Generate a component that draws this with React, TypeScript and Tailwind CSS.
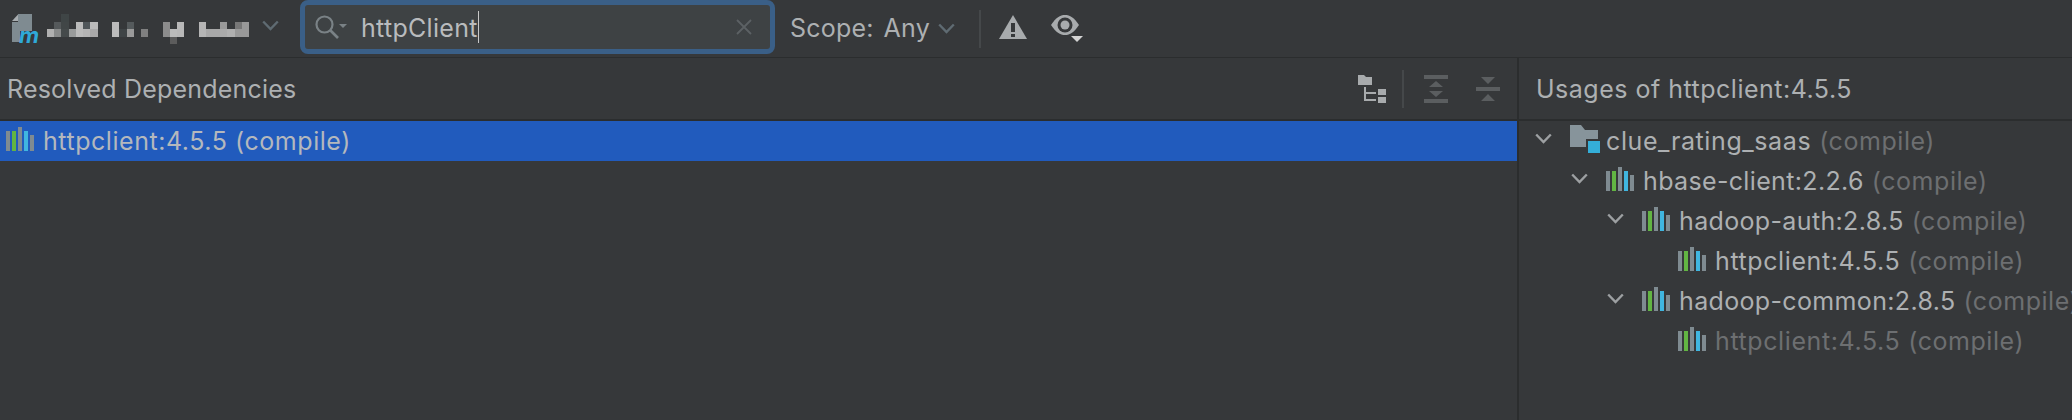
import React from 'react';

const FONT = 'font-["Inter","Liberation_Sans",sans-serif]';

// pixelated (blurred out) project name: x, y, w, h, colour
const MOSAIC: [number, number, number, number, string][] = [
  [0, 15, 8, 8, '#b0b0b0'],
  [7, 8, 8, 7, '#55595b'],
  [7, 15, 8, 8, '#888a8a'],
  [14, 0, 8, 8, '#3f4546'],
  [14, 8, 8, 7, '#414647'],
  [14, 15, 8, 8, '#454a4b'],
  [22, 15, 7, 8, '#999b9b'],
  [29, 8, 7, 15, '#bbbbbb'],
  [36, 8, 7, 7, '#50565a'],
  [36, 15, 7, 8, '#b5b5b5'],
  [43, 8, 8, 7, '#bbbbbb'],
  [43, 15, 8, 8, '#a9a9a9'],
  [65, 8, 7, 15, '#bbbbbb'],
  [72, 15, 8, 8, '#3f4446'],
  [80, 8, 7, 7, '#555a5c'],
  [80, 15, 7, 8, '#9a9a9a'],
  [94, 15, 7, 8, '#808080'],
  [116, 8, 7, 15, '#8c8c8c'],
  [123, 15, 7, 8, '#bbbbbb'],
  [123, 23, 7, 7, '#5c5c5c'],
  [130, 8, 7, 15, '#b8b8b8'],
  [152, 8, 7, 15, '#b5b5b5'],
  [159, 15, 14, 8, '#a8a8a8'],
  [173, 8, 7, 7, '#999999'],
  [173, 15, 7, 8, '#aaaaaa'],
  [180, 15, 8, 8, '#b0b0b0'],
  [188, 8, 7, 7, '#777777'],
  [188, 15, 7, 8, '#999999'],
  [195, 8, 7, 15, '#999999'],
];

function Mosaic() {
  return (
    <svg width="205" height="30" viewBox="0 0 205 30" className="shrink-0 ml-[3px]">
      {MOSAIC.map(([x, y, w, h, fill], i) => (
        <rect key={i} x={x} y={y} width={w} height={h} fill={fill} />
      ))}
    </svg>
  );
}

function MavenLogo() {
  return (
    <svg width="32" height="40" viewBox="0 -5 32 40" className="shrink-0">
      <path d="M6 0H20V17H8V28H0V8H6Z" fill="#7f8b91" />
      <path d="M6 0.5V7H0Z" fill="#a8adb0" />
      <text x="7" y="29" fontSize="22" fontWeight="700" fontStyle="italic" fill="#2fa9d8" fontFamily="Inter, sans-serif">m</text>
    </svg>
  );
}

function Chevron({ className, color = '#9da0a2' }: { className?: string; color?: string }) {
  return (
    <svg width="17" height="11" viewBox="0 0 17 11" className={className}>
      <path d="M1.2 1.5L8.5 9L15.8 1.5" fill="none" stroke={color} strokeWidth="2.4" />
    </svg>
  );
}

function SearchIcon() {
  return (
    <svg width="32" height="24" viewBox="0 0 32 24" className="shrink-0">
      <circle cx="9.5" cy="9.5" r="8" fill="none" stroke="#7a8286" strokeWidth="2.2" />
      <path d="M15 15L23 23" stroke="#7a8286" strokeWidth="2.6" />
      <path d="M24 9H32L28 13Z" fill="#7a8286" />
    </svg>
  );
}

function WarningIcon() {
  return (
    <svg width="28" height="24" viewBox="0 0 28 24" className="shrink-0">
      <path d="M14 0L28 24H0Z" fill="#a8abad" />
      <rect x="12" y="8" width="4" height="9" fill="#36383a" />
      <rect x="12" y="19" width="4" height="3" fill="#36383a" />
    </svg>
  );
}

function EyeIcon() {
  return (
    <svg width="32" height="28" viewBox="0 0 32 28" className="shrink-0">
      <path d="M0 10C5 2.5 9 0 14 0S23 2.5 28 10C23 17.5 19 20 14 20S5 17.5 0 10Z" fill="#a8abad" />
      <circle cx="14" cy="10" r="7.5" fill="#36383a" />
      <circle cx="14" cy="10" r="4.5" fill="#a8abad" />
      <path d="M20 21H32L26 27Z" fill="#d4d4d4" />
    </svg>
  );
}

function TreeIcon() {
  return (
    <svg width="28" height="28" viewBox="0 0 28 28" className="shrink-0">
      <path d="M0 0H6L8 2H14V10H0Z" fill="#a8abad" />
      <path d="M7 12V25H18M7 18H18" fill="none" stroke="#a8abad" strokeWidth="2" />
      <rect x="20" y="14" width="8" height="6" fill="#a8abad" />
      <rect x="20" y="22" width="8" height="6" fill="#a8abad" />
    </svg>
  );
}

function ExpandIcon() {
  return (
    <svg width="24" height="28" viewBox="0 0 24 28" className="shrink-0">
      <path d="M0 0H24V4H0ZM0 24H24V28H0ZM12 6L19 12H5ZM12 22L5 16H19Z" fill="#5b5e60" />
    </svg>
  );
}

function CollapseIcon() {
  return (
    <svg width="24" height="28" viewBox="0 0 24 28" className="shrink-0">
      <path d="M0 12H24V16H0ZM5 2H19L12 9ZM5 26H19L12 19Z" fill="#5b5e60" />
    </svg>
  );
}

function LibraryIcon() {
  return (
    <svg width="28" height="24" viewBox="0 0 28 24" className="shrink-0">
      <rect x="0" y="4" width="4" height="20" fill="#7f8b91" />
      <rect x="6" y="4" width="4" height="20" fill="#62b543" />
      <rect x="12" y="0" width="4" height="24" fill="#7f8b91" />
      <rect x="18" y="4" width="4" height="20" fill="#40b6e0" />
      <rect x="24" y="8" width="4" height="16" fill="#7f8b91" />
    </svg>
  );
}

function ModuleIcon() {
  return (
    <svg width="30" height="28" viewBox="0 0 30 28" className="shrink-0">
      <path d="M0 0H11L15 5H28V22H0Z" fill="#87949b" />
      <rect x="16" y="14" width="14" height="14" fill="#36383a" />
      <rect x="18" y="16" width="12" height="12" fill="#34aed8" />
    </svg>
  );
}

interface TreeRow {
  name: string;
  depth: 0 | 1 | 2 | 3;
  module?: boolean;
  leaf?: boolean;
  dim?: boolean;
  hyphen?: boolean;
}

const ROWS: TreeRow[] = [
  { name: 'clue_rating_saas', depth: 0, module: true },
  { name: 'hbase-client:2.2.6', depth: 1, hyphen: true },
  { name: 'hadoop-auth:2.8.5', depth: 2, hyphen: true },
  { name: 'httpclient:4.5.5', depth: 3, leaf: true },
  { name: 'hadoop-common:2.8.5', depth: 2, hyphen: true },
  { name: 'httpclient:4.5.5', depth: 3, leaf: true, dim: true },
];

const DEPTH_PADDING = ['pl-4', 'pl-[52px]', 'pl-[88px]', 'pl-[124px]'];

export default function App() {
  return (
    <div className={`${FONT} flex flex-col h-screen w-full overflow-hidden bg-[#36383a] text-[25px] text-[#adb0b2]`}>
      {/* Toolbar */}
      <div className="flex items-center h-[58px] shrink-0 border-b border-[#2b2d2e] pl-3">
        <MavenLogo />
        <Mosaic />
        <Chevron className="ml-[10px] mr-[21px] -mt-[6px] shrink-0" color="#5f6b72" />
        <div className="self-start flex items-center w-[475px] h-[54px] border-[5px] border-[#3a5f87] rounded-lg bg-[#3e4244] pl-[10px] pr-[18px]">
          <SearchIcon />
          <div className="ml-[14px] flex items-center text-[#b9bbbd] tracking-[0.3px] leading-none">
            <span className="pt-[2px]">httpClient</span>
            <span className="w-px h-8 bg-[#c8c8c8]" />
          </div>
          <svg width="16" height="16" viewBox="0 0 16 16" className="ml-auto shrink-0">
            <path d="M1 1L15 15M15 1L1 15" stroke="#5c6164" strokeWidth="1.8" />
          </svg>
        </div>
        <span className="ml-[15px] tracking-[0.2px]">Scope:</span>
        <span className="ml-2.5 tracking-[0.2px]">Any</span>
        <Chevron className="ml-2 shrink-0" color="#5f6b72" />
        <div className="ml-6 w-0.5 h-[38px] bg-[#45484a]" />
        <div className="ml-[18px] flex items-start gap-6">
          <WarningIcon />
          <EyeIcon />
        </div>
      </div>

      <div className="flex flex-1 min-h-0">
        {/* Resolved dependencies */}
        <div className="w-[1519px] shrink-0 border-r-2 border-[#2b2d2e]">
          <div className="flex items-center h-[63px] border-b-2 border-[#2b2d2e] pl-[7px] pr-[17px]">
            <span className="pt-[2px] tracking-[0.2px]">Resolved Dependencies</span>
            <div className="ml-auto flex items-center">
              <TreeIcon />
              <div className="ml-4 mr-5 w-0.5 h-[38px] bg-[#45484a]" />
              <ExpandIcon />
              <div className="ml-7">
                <CollapseIcon />
              </div>
            </div>
          </div>
          <div className="flex items-center h-10 bg-[#215bbd] pl-1.5 text-[#b4b8bd]">
            <div className="-mt-1">
              <LibraryIcon />
            </div>
            <span className="ml-[9px] pt-[2px] tracking-[0.55px]">httpclient:4.5.5 (compile)</span>
          </div>
        </div>

        {/* Usages */}
        <div className="flex-1 min-w-0">
          <div className="flex items-center h-[63px] border-b-2 border-[#2b2d2e] pl-[17px] pt-[2px] tracking-[0.5px]">
            Usages of httpclient:4.5.5
          </div>
          {ROWS.map((row, i) => (
            <div key={i} className={`flex items-center h-10 whitespace-nowrap ${DEPTH_PADDING[row.depth]}`}>
              {row.leaf ? <span className="w-[17px] shrink-0" /> : <Chevron className="shrink-0 -mt-[6px]" />}
              <div className="ml-[18px] -mt-1 shrink-0">
                {row.module ? <ModuleIcon /> : <LibraryIcon />}
              </div>
              <span className={`${row.module ? 'ml-[6px]' : 'ml-[9px]'} pt-[2px] tracking-[0.55px]`}>
                <span className={`${row.dim ? 'text-[#6d6f71]' : ''} ${row.hyphen ? 'tracking-[0.35px]' : 'tracking-[0.6px]'}`}>{row.name}</span>
                <span className="ml-2 text-[#6d6f71]">(compile)</span>
              </span>
            </div>
          ))}
        </div>
      </div>
    </div>
  );
}
